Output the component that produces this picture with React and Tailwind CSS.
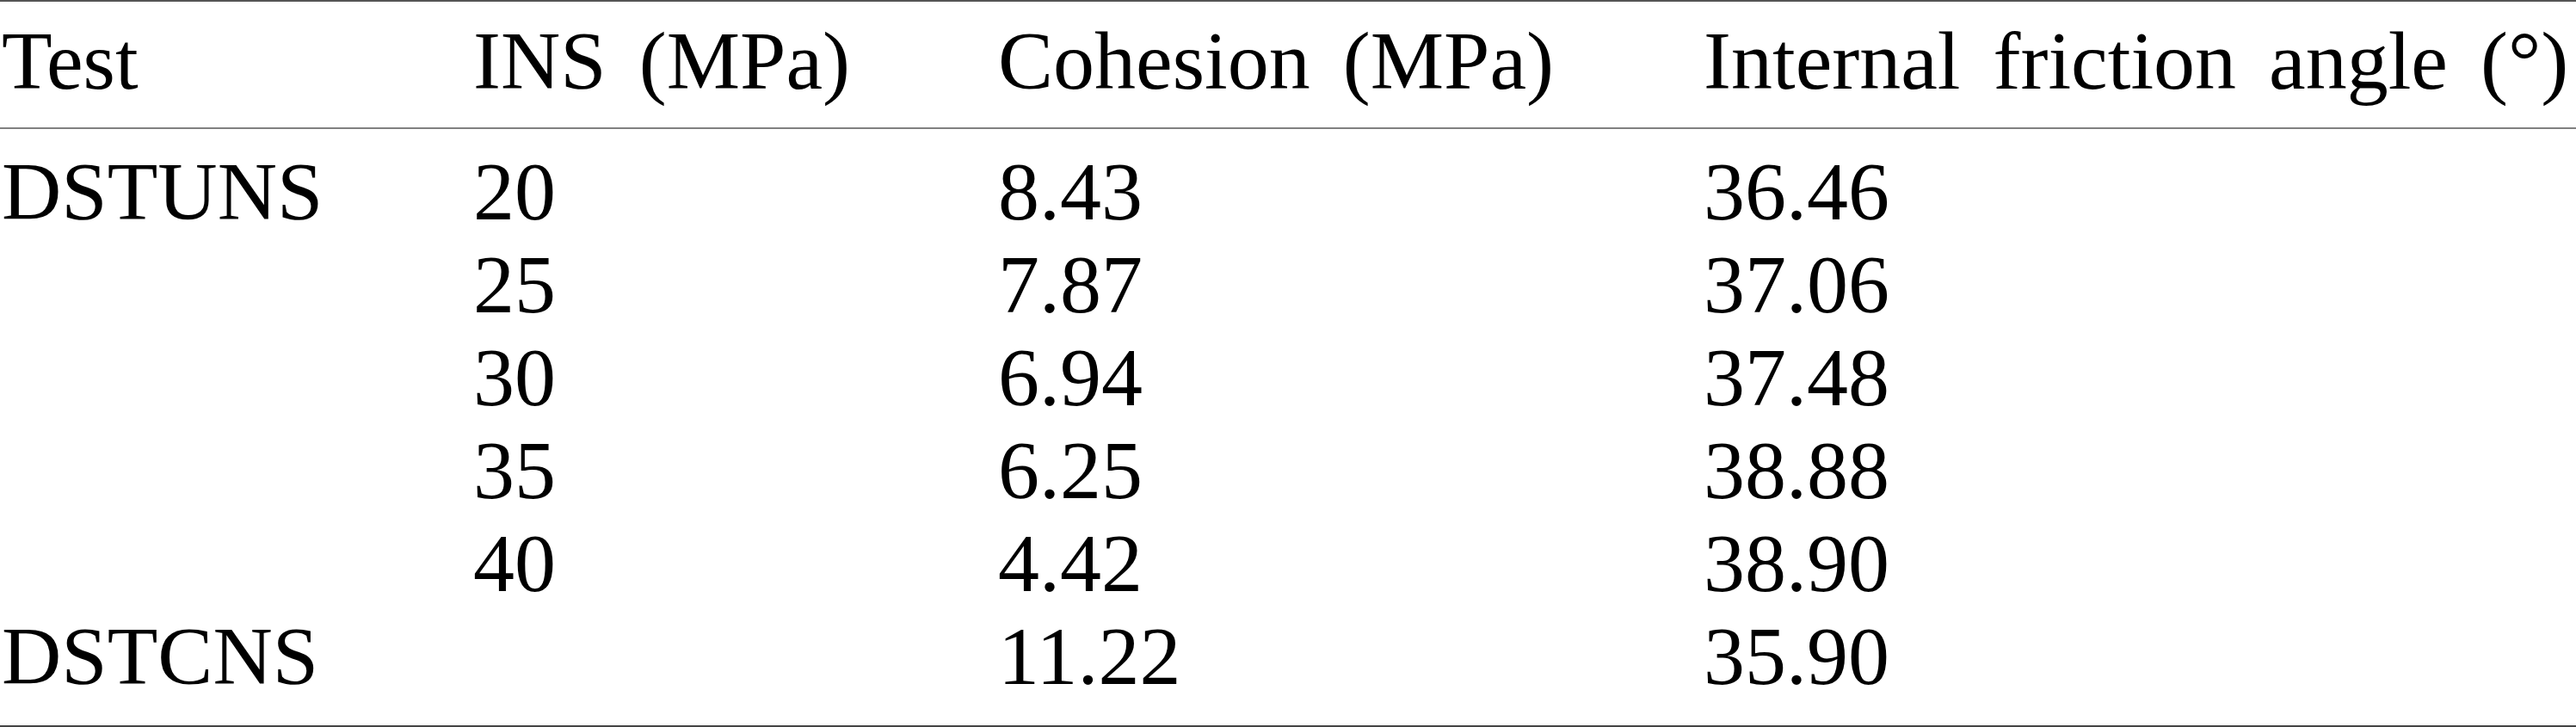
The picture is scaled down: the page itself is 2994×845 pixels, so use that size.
function Cell({ text }) {
  return (
    <div className="h-[108px] whitespace-nowrap">
      <span className="font-['Times_New_Roman'] inline-flex gap-[38px] text-[96px] leading-[108px]">
        {text.split(" ").map((w, i) => (
          <span key={i} className="font-['Times_New_Roman']">{w}</span>
        ))}
      </span>
    </div>
  );
}

export default function App() {
  const rows = [
    ["DSTUNS", "20", "8.43", "36.46"],
    ["", "25", "7.87", "37.06"],
    ["", "30", "6.94", "37.48"],
    ["", "35", "6.25", "38.88"],
    ["", "40", "4.42", "38.90"],
    ["DSTCNS", "", "11.22", "35.90"],
  ];
  const grid = "grid grid-cols-[548px_610px_820px_1fr]";
  return (
    <div className="w-[2994px] h-[845px] bg-white text-black">
      <div className={`${grid} border-t-[2px] border-[#555555] pl-[2px] pt-[15px] pb-[23px]`}>
        <Cell text="Test" />
        <Cell text="INS (MPa)" />
        <Cell text="Cohesion (MPa)" />
        <Cell text="Internal friction angle (°)" />
      </div>
      <div className="border-t-[2px] border-[#808080] pl-[2px] pt-[19px] pb-[26px] border-b-[2px] border-b-[#444444]">
        {rows.map((r, i) => (
          <div key={i} className={grid}>
            {r.map((c, j) => (
              <Cell key={j} text={c} />
            ))}
          </div>
        ))}
      </div>
    </div>
  );
}
